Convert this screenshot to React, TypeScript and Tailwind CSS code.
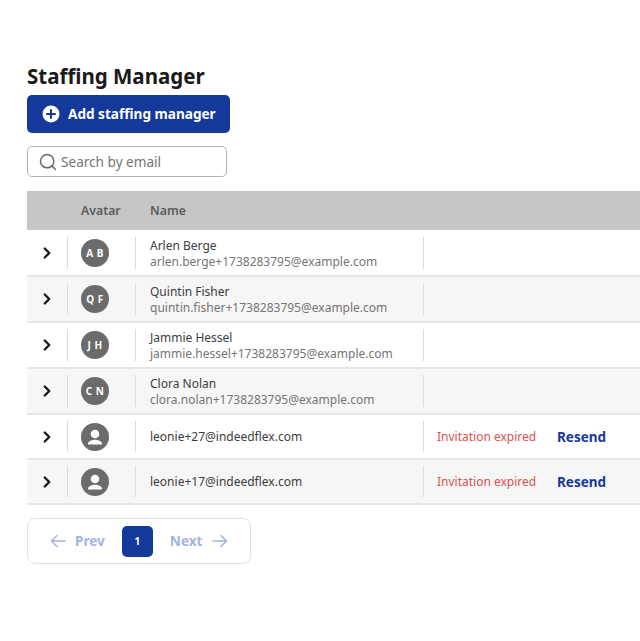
import { ChevronRight, Search } from 'lucide-react';

type Row = {
  initials?: string;
  name?: string;
  email: string;
  expired?: boolean;
};

const rows: Row[] = [
  { initials: 'A B', name: 'Arlen Berge', email: 'arlen.berge+1738283795@example.com' },
  { initials: 'Q F', name: 'Quintin Fisher', email: 'quintin.fisher+1738283795@example.com' },
  { initials: 'J H', name: 'Jammie Hessel', email: 'jammie.hessel+1738283795@example.com' },
  { initials: 'C N', name: 'Clora Nolan', email: 'clora.nolan+1738283795@example.com' },
  { email: 'leonie+27@indeedflex.com', expired: true },
  { email: 'leonie+17@indeedflex.com', expired: true },
];

const Divider = () => <div className="w-px self-stretch my-[6px] bg-[#dcdcdc] shrink-0" />;

const Avatar = ({ initials }: { initials?: string }) => (
  <div className="w-[28px] h-[28px] rounded-full bg-[#6b6b6b] flex items-center justify-center text-white text-[10px] font-bold tracking-[0.500px]">
    {initials ? (
      initials
    ) : (
      <svg width="28" height="28" viewBox="0 0 28 28" fill="#ffffff">
        <circle cx="14" cy="11" r="4.300" />
        <path d="M7 21.500v-1c0-2.500 4.600-3.800 7-3.800s7 1.300 7 3.800v1z" />
      </svg>
    )}
  </div>
);

const App = () => {
  return (
    <div className="w-[640px] h-[641px] overflow-hidden bg-white pl-[27px] pt-[62px] font-['Noto_Sans',sans-serif]">
      <h1 className="text-[20.500px] leading-[28px] font-bold text-[#1a1a1a]">Staffing Manager</h1>

      <button className="mt-[5px] w-[203px] h-[38px] rounded-[5px] bg-[#14399b] flex items-center pl-[15px] gap-[8px] text-white text-[13.600px] font-bold">
        <svg width="18" height="18" viewBox="0 0 18 18">
          <circle cx="9" cy="9" r="8.500" fill="#ffffff" />
          <path d="M9 5v8M5 9h8" stroke="#14399b" strokeWidth="2" strokeLinecap="round" />
        </svg>
        Add staffing manager
      </button>

      <div className="mt-[13px] w-[200px] h-[31px] rounded-[5px] border border-[#b3b3b3] flex items-center pl-[10px] gap-[3px]">
        <Search size={20} strokeWidth={1.800} className="text-[#6b6b6b]" />
        <span className="mt-px text-[13.600px] text-[#757575]">Search by email</span>
      </div>

      <div className="mt-[14px] w-[613px]">
        <div className="h-[39px] pt-px bg-[#c6c6c6] flex items-center text-[12.300px] font-semibold text-[#5c5c5c]">
          <div className="w-[54px] shrink-0" />
          <div className="w-[69px] shrink-0">Avatar</div>
          <div>Name</div>
        </div>

        <div className="mt-px">
          {rows.map((row, i) => (
            <div
              key={row.email}
              className={`flex items-stretch border-b-2 border-[#e6e6e6] ${row.name ? 'h-[46px]' : 'h-[45px]'} ${
                i % 2 === 1 ? 'bg-[#f6f6f6]' : 'bg-white'
              }`}
            >
              <div className="w-[40px] shrink-0 flex items-center justify-center">
                <ChevronRight size={18} strokeWidth={3.200} className="text-[#1a1a1a]" />
              </div>
              <Divider />
              <div className="w-[67px] shrink-0 flex items-center pl-[13px]">
                <Avatar initials={row.initials} />
              </div>
              <Divider />
              <div className="w-[287px] shrink-0 flex flex-col justify-center pl-[14px] pt-px text-[12px] leading-[16px]">
                {row.name ? (
                  <>
                    <div className="text-[#3d3d3d]">{row.name}</div>
                    <div className="text-[#757575]">{row.email}</div>
                  </>
                ) : (
                  <div className="text-[#3d3d3d]">{row.email}</div>
                )}
              </div>
              <Divider />
              {row.expired && (
                <div className="flex items-center pl-[13px]">
                  <span className="w-[120px] text-[12px] text-[#d9534f]">Invitation expired</span>
                  <span className="mt-px text-[13.500px] font-bold text-[#14399b]">Resend</span>
                </div>
              )}
            </div>
          ))}
        </div>
      </div>

      <div className="mt-[13px] w-[224px] h-[46px] rounded-[8px] border border-[#e0e0e0] flex items-center pl-[22px] text-[13.600px] font-bold text-[#a3b3de]">
        <svg width="16" height="14" viewBox="0 0 16 14" fill="none" stroke="#a3b3de" strokeWidth="1.500" strokeLinecap="round" strokeLinejoin="round">
          <path d="M15 7H1.500M7 1.500 1.500 7 7 12.500" />
        </svg>
        <span className="ml-[9px]">Prev</span>
        <div className="ml-[17px] w-[31px] h-[31px] rounded-[5px] bg-[#14399b] flex items-center justify-center text-white text-[10px]">
          1
        </div>
        <span className="ml-[17px]">Next</span>
        <svg className="ml-[9px]" width="16" height="14" viewBox="0 0 16 14" fill="none" stroke="#a3b3de" strokeWidth="1.500" strokeLinecap="round" strokeLinejoin="round">
          <path d="M1 7h13.500M9 1.500 14.500 7 9 12.500" />
        </svg>
      </div>
    </div>
  );
};

export default App;
